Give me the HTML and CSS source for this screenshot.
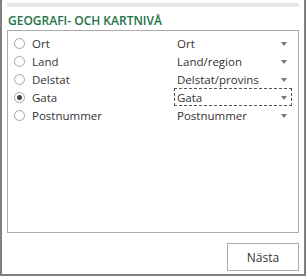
FILE: index.html
```html
<!DOCTYPE html>
<html>
<head>
<meta charset="utf-8">
<link rel="stylesheet" href="styles.css">
</head>
<body>
<div class="frame">
  <div class="strip"></div>
  <div class="title">GEOGRAFI- OCH KARTNIVÅ</div>
  <div class="list">
    <div class="row"><span class="radio"></span><span class="label">Ort</span><span class="select"><span>Ort</span><i class="arrow"></i></span></div>
    <div class="row"><span class="radio"></span><span class="label">Land</span><span class="select"><span>Land/region</span><i class="arrow"></i></span></div>
    <div class="row"><span class="radio"></span><span class="label">Delstat</span><span class="select"><span>Delstat/provins</span><i class="arrow"></i></span></div>
    <div class="row"><span class="radio checked"></span><span class="label">Gata</span><span class="select focus"><span>Gata</span><i class="arrow"></i></span></div>
    <div class="row"><span class="radio"></span><span class="label">Postnummer</span><span class="select"><span>Postnummer</span><i class="arrow"></i></span></div>
  </div>
  <div class="footer"><button class="btn">Nästa</button></div>
</div>
</body>
</html>
```
FILE: styles.css
```css
html, body { margin: 0; padding: 0; background: #fff; }
body { font-family: "Open Sans", "Noto Sans", sans-serif; font-size: 11.5px; color: #333; }
.frame {
  width: 306px; height: 276px; box-sizing: border-box;
  border: 2px solid #7f7f7f; border-top: none;
  padding: 3px 5px 0 5px;
  display: flex; flex-direction: column;
}
.strip { height: 4px; background: #e6e6e6; }
.title {
  margin-top: 6px; height: 17px; line-height: 16px;
  color: #217346; font-weight: 600; font-size: 12px; padding-left: 1px;
}
.list {
  border: 1px solid #ababab; height: 203px; box-sizing: border-box;
  padding-top: 3px;
}
.row { display: flex; align-items: center; height: 18px; }
.radio {
  width: 11px; height: 11px; box-sizing: border-box; border: 1px solid #a6a6a6;
  border-radius: 50%; margin-left: 6px; margin-right: 7px; display: flex;
  align-items: center; justify-content: center; background: #fff;
}
.radio.checked::after { content: ""; width: 5px; height: 5px; border-radius: 50%; background: #444; }
.label { width: 142px; }
.select {
  width: 118px; height: 18px; box-sizing: border-box; border: 1px solid transparent;
  display: flex; align-items: center; justify-content: space-between; padding: 0 4px 0 2px;
}
.select.focus { border: 1px dashed #555; }
.arrow {
  width: 0; height: 0; border-left: 3.5px solid transparent; border-right: 3.5px solid transparent;
  border-top: 4px solid #777; margin-top: 1px;
}
.footer { display: flex; justify-content: flex-end; padding-top: 10px; }
.btn {
  width: 72px; height: 28px; border: 1px solid #adadad; background: #fff;
  font-family: inherit; font-size: 12px; color: #333; padding: 0;
}
```
